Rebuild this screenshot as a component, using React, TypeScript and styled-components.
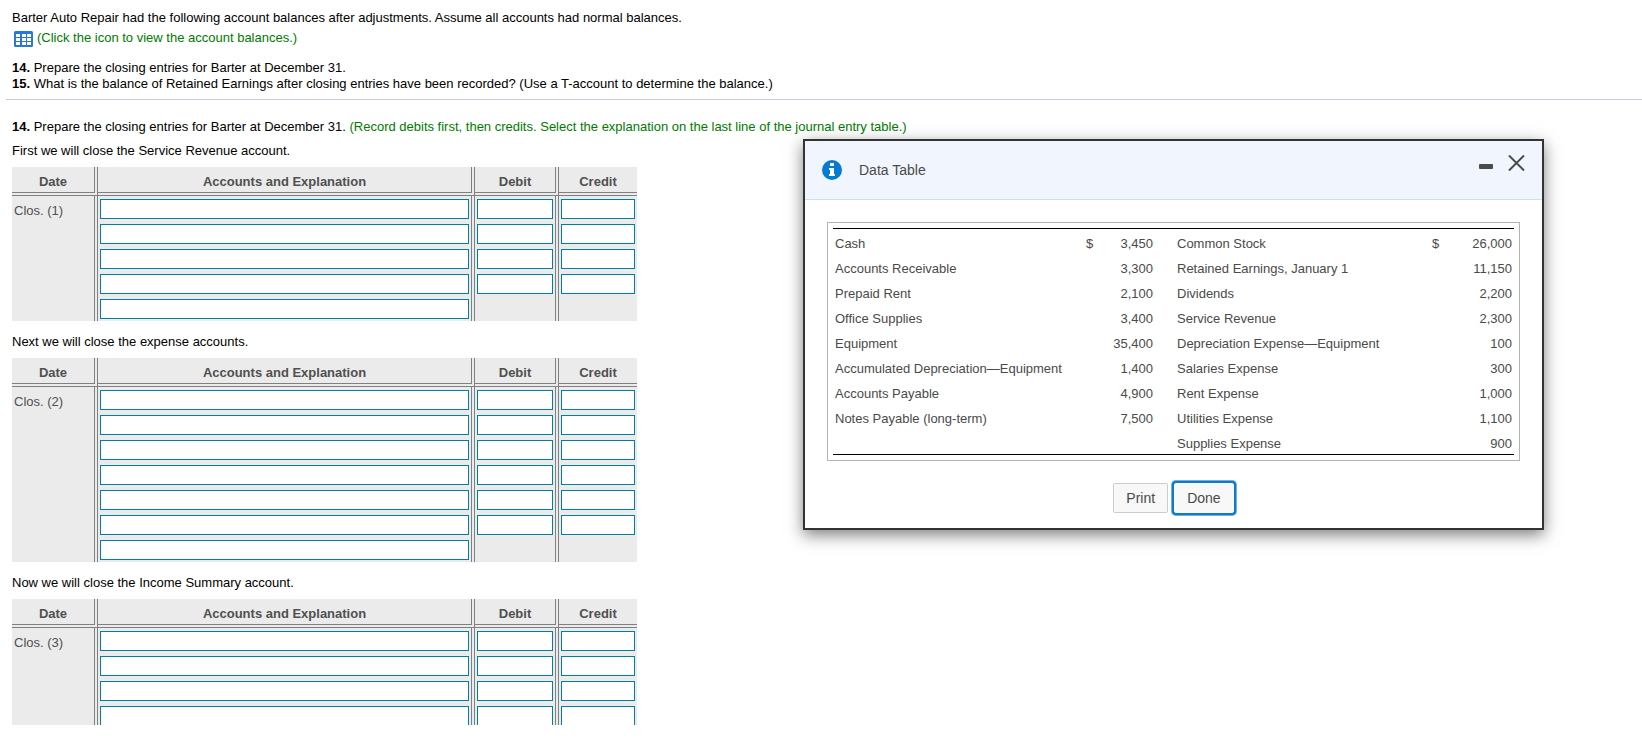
import React from "react";
import styled, { createGlobalStyle } from "styled-components";

const GlobalStyle = createGlobalStyle`
  *, *::before, *::after { box-sizing: border-box; }
  body {
    margin: 0;
    background: #fff;
    color: #000;
    font-family: Arial, "Liberation Sans", sans-serif;
    font-size: 13px;
    line-height: 16px;
  }
`;

const Page = styled.div`
  position: relative;
  height: 100vh;
  padding-bottom: 13px;
  overflow: hidden;
`;

const Pane = styled.main`
  height: 100%;
  overflow: hidden;
`;

const Problem = styled.header`
  margin-left: 6px;
  padding: 10px 6px 7px;
  border-bottom: 1px solid #c6cbdc;
`;

const Line = styled.p`
  margin: 0;
`;

const TableLink = styled.a`
  display: flex;
  align-items: center;
  gap: 4px;
  margin: 2px 0 13px;
  padding-left: 2px;
  color: #007a00;
  text-decoration: none;

  svg { margin-top: 3px; }
`;

const Question = styled.section`
  padding: 19px 12px 0;
`;

const Hint = styled.span`
  color: #007a00;
`;

const Step = styled.p`
  margin: 8px 0;
`;

const Journal = styled.table`
  width: 625px;
  margin-bottom: 13px;
  table-layout: fixed;
  border-collapse: separate;
  border-spacing: 0;
  background: #ebebeb;
  color: #505050;
`;

const Head = styled.th`
  height: 29px;
  padding: 4px 0 0;
  border-right: 4px double #808080;
  border-bottom: 4px double #808080;

  &:last-child { border-right: 0; }
`;

const DateCell = styled.th`
  padding: 7px 2px;
  border-right: 4px double #808080;
  font-weight: normal;
  text-align: left;
  vertical-align: top;
`;

const Cell = styled.td`
  height: 25px;
  padding: 3px 2px 2px;
  border-right: 4px double #808080;

  &:last-child { border-right: 0; }
`;

const Entry = styled.input`
  display: block;
  width: 100%;
  height: 20px;
  margin: 0;
  padding: 0 3px;
  border: 1px solid #007fa3;
  border-radius: 0;
  background: #fff;
  font: inherit;
`;

const Dialog = styled.div`
  position: absolute;
  top: 139px;
  left: 803px;
  width: 741px;
  border: 2px solid #333;
  background: #fff;
  box-shadow: 0 5px 15px rgba(0, 0, 0, 0.5);
  color: #4a4a4a;
`;

const TitleBar = styled.div`
  display: flex;
  align-items: center;
  height: 59px;
  padding: 0 17px;
  border-bottom: 1px solid #c5e1f2;
  background: #f1f6fe;
`;

const Title = styled.h2`
  flex: 1;
  margin: 0 0 0 17px;
  font-size: 14px;
  font-weight: normal;
`;

const WindowButton = styled.button`
  display: flex;
  margin: 0 0 14px 15px;
  padding: 0;
  border: 0;
  background: none;
  color: #4a4a4a;
`;

const Frame = styled.div`
  margin: 22px;
  padding: 5px;
  border: 1px solid #b3b3b3;
`;

const Balances = styled.table`
  width: 100%;
  table-layout: fixed;
  border-collapse: separate;
  border-spacing: 0;
  border-top: 1px solid #000;
  border-bottom: 1px solid #000;
`;

const Name = styled.td`
  height: 25px;
  padding: 5px 2px 0;
  white-space: nowrap;
`;

const Amount = styled(Name)`
  text-align: right;
`;

const Actions = styled.div`
  display: flex;
  justify-content: center;
  gap: 6px;
  padding-bottom: 15px;
`;

const ActionButton = styled.button<{ $active?: boolean }>`
  height: 30px;
  padding: 0 12px;
  border: 1px solid ${(p) => (p.$active ? "#f8f8f8" : "#ccc")};
  border-radius: 2px;
  background: #f8f8f8;
  color: #4a4a4a;
  font: inherit;
  font-size: 14px;
  box-shadow: ${(p) => (p.$active ? "0 0 0 2px #0f7acb, 0 0 0 3px #6fb1e0" : "none")};
`;

const GridIcon = () => (
  <svg width="19" height="16" viewBox="0 0 19 16" aria-hidden="true">
    <rect width="19" height="16" rx="1.5" fill="#2878d8" />
    {[3, 7, 11].map((y) =>
      [2, 8, 13].map((x) => <rect key={`${x}-${y}`} x={x} y={y} width="4" height="3" fill="#fff" />)
    )}
  </svg>
);

const InfoIcon = () => (
  <svg width="20" height="20" viewBox="0 0 20 20" aria-hidden="true">
    <circle cx="10" cy="10" r="10" fill="#047bd2" />
    <path d="M8 3h4v3H8zM7 8h5v6h1v2H7v-2h1v-4H7z" fill="#fff" />
  </svg>
);

function JournalTable({ number, rows }: { number: number; rows: number }) {
  const label = `Clos. (${number})`;
  return (
    <Journal>
      <colgroup>
        <col style={{ width: 86 }} />
        <col style={{ width: 377 }} />
        <col style={{ width: 84 }} />
        <col style={{ width: 78 }} />
      </colgroup>
      <thead>
        <tr>
          <Head scope="col">Date</Head>
          <Head scope="col">Accounts and Explanation</Head>
          <Head scope="col">Debit</Head>
          <Head scope="col">Credit</Head>
        </tr>
      </thead>
      <tbody>
        {Array.from({ length: rows }, (_, i) => (
          <tr key={i}>
            {i === 0 && <DateCell scope="rowgroup" rowSpan={rows}>{label}</DateCell>}
            <Cell><Entry aria-label={`${label} account, line ${i + 1}`} /></Cell>
            <Cell>{i < rows - 1 && <Entry aria-label={`${label} debit, line ${i + 1}`} />}</Cell>
            <Cell>{i < rows - 1 && <Entry aria-label={`${label} credit, line ${i + 1}`} />}</Cell>
          </tr>
        ))}
      </tbody>
    </Journal>
  );
}

const balances = [
  ["Cash", "3,450", "Common Stock", "26,000"],
  ["Accounts Receivable", "3,300", "Retained Earnings, January 1", "11,150"],
  ["Prepaid Rent", "2,100", "Dividends", "2,200"],
  ["Office Supplies", "3,400", "Service Revenue", "2,300"],
  ["Equipment", "35,400", "Depreciation Expense—Equipment", "100"],
  ["Accumulated Depreciation—Equipment", "1,400", "Salaries Expense", "300"],
  ["Accounts Payable", "4,900", "Rent Expense", "1,000"],
  ["Notes Payable (long-term)", "7,500", "Utilities Expense", "1,100"],
  ["", "", "Supplies Expense", "900"],
];

const balanceColumns = [251, 22, 49, 20, 255, 22, 62];

function DataTable() {
  return (
    <Dialog role="dialog" aria-labelledby="data-table-title">
      <TitleBar>
        <InfoIcon />
        <Title id="data-table-title">Data Table</Title>
        <WindowButton type="button" aria-label="Minimize">
          <svg width="14" height="16" viewBox="0 0 14 16">
            <rect y="9" width="14" height="5" rx="1" fill="currentColor" />
          </svg>
        </WindowButton>
        <WindowButton type="button" aria-label="Close">
          <svg width="17" height="16" viewBox="0 0 17 16" stroke="currentColor" strokeWidth="2">
            <path d="M1 0.5L16 15.5M16 0.5L1 15.5" />
          </svg>
        </WindowButton>
      </TitleBar>
      <Frame>
        <Balances>
          <colgroup>
            {balanceColumns.map((width, i) => <col key={i} style={{ width }} />)}
          </colgroup>
          <tbody>
            {balances.map(([left, leftAmount, right, rightAmount], i) => (
              <tr key={right}>
                <Name>{left}</Name>
                <Name>{i === 0 && "$"}</Name>
                <Amount>{leftAmount}</Amount>
                <Name />
                <Name>{right}</Name>
                <Name>{i === 0 && "$"}</Name>
                <Amount>{rightAmount}</Amount>
              </tr>
            ))}
          </tbody>
        </Balances>
      </Frame>
      <Actions>
        <ActionButton type="button">Print</ActionButton>
        <ActionButton type="button" $active>Done</ActionButton>
      </Actions>
    </Dialog>
  );
}

export default function App() {
  return (
    <Page>
      <GlobalStyle />
      <Pane>
        <Problem>
          <Line>
            Barter Auto Repair had the following account balances after adjustments. Assume all
            accounts had normal balances.
          </Line>
          <TableLink href="#data-table-title">
            <GridIcon />
            (Click the icon to view the account balances.)
          </TableLink>
          <Line><b>14.</b> Prepare the closing entries for Barter at December 31.</Line>
          <Line>
            <b>15.</b> What is the balance of Retained Earnings after closing entries have been
            recorded? (Use a T-account to determine the balance.)
          </Line>
        </Problem>
        <Question>
          <Line>
            <b>14.</b> Prepare the closing entries for Barter at December 31.{" "}
            <Hint>
              (Record debits first, then credits. Select the explanation on the last line of the
              journal entry table.)
            </Hint>
          </Line>
          <Step>First we will close the Service Revenue account.</Step>
          <JournalTable number={1} rows={5} />
          <Step>Next we will close the expense accounts.</Step>
          <JournalTable number={2} rows={7} />
          <Step>Now we will close the Income Summary account.</Step>
          <JournalTable number={3} rows={5} />
        </Question>
      </Pane>
      <DataTable />
    </Page>
  );
}
